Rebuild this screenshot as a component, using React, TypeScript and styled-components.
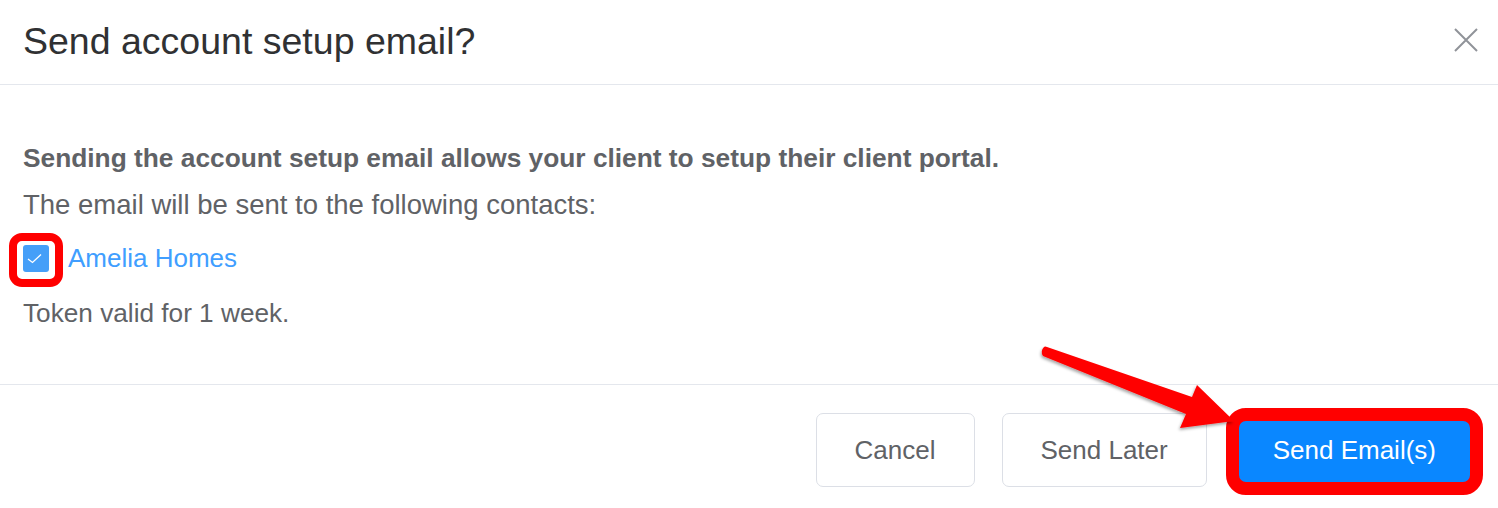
import React from 'react'
import styled, { createGlobalStyle } from 'styled-components'

const GlobalStyle = createGlobalStyle`
  html, body {
    margin: 0;
    padding: 0;
    background: #ffffff;
    font-family: "Liberation Sans", Arial, sans-serif;
  }
`

export default function App() {
  return (
    <Page>
      <GlobalStyle />
      <Header>
        <Title>Send account setup email?</Title>
        <CloseBtn aria-label="Close">
          <svg width="24" height="24" viewBox="0 0 24 24">
            <path d="M1 1 L23 23 M23 1 L1 23" stroke="#909399" strokeWidth="2" fill="none" />
          </svg>
        </CloseBtn>
      </Header>

      <Body>
        <Line bold size={26.3}>Sending the account setup email allows your client to setup their client portal.</Line>
        <Line gap={7} size={27.5}>The email will be sent to the following contacts:</Line>
        <ContactRow>
          <CheckWrap>
            <CheckBox>
              <svg width="26" height="27" viewBox="0 0 26 27">
                <path d="M5 14 L9.5 17.5 L18 9.5" stroke="#ffffff" strokeWidth="1.3" fill="none" />
              </svg>
            </CheckBox>
            <Highlight kind="check" />
          </CheckWrap>
          <ContactName>Amelia Homes</ContactName>
        </ContactRow>
        <Line gap={15} size={26.2}>Token valid for 1 week.</Line>
      </Body>

      <Footer>
        <Button>Cancel</Button>
        <Button>Send Later</Button>
        <PrimaryWrap>
          <Button primary>Send Email(s)</Button>
          <Highlight kind="button" />
        </PrimaryWrap>
      </Footer>

      <Arrow width="220" height="100" viewBox="0 0 220 100">
        <defs>
          <filter id="sh" x="-20%" y="-20%" width="140%" height="160%">
            <feDropShadow dx="-1" dy="2" stdDeviation="1.5" floodColor="#000" floodOpacity="0.35" />
          </filter>
        </defs>
        <path
          d="M14 7 Q10 11 13 16 L156 74 L150 88 L204 81 L167 45 L162 57 L17 7 Q15 6 14 7 Z"
          fill="#ff0000"
          filter="url(#sh)"
        />
      </Arrow>
    </Page>
  )
}

const Page = styled.div`
  position: relative;
  width: 1498px;
  height: 508px;
  overflow: hidden;
  background: #ffffff;
`

const Header = styled.div`
  height: 85px;
  box-sizing: border-box;
  border-bottom: 1px solid #e4e7ed;
  padding: 0 20px 0 23px;
  display: flex;
  align-items: center;
  justify-content: space-between;
`

const Title = styled.h1`
  margin: 0;
  font-size: 37.5px;
  font-weight: 400;
  color: #303133;
  line-height: 1;
`

const CloseBtn = styled.button`
  background: none;
  border: none;
  padding: 0;
  width: 24px;
  height: 24px;
  margin-bottom: 4px;
  cursor: pointer;
  svg { display: block; }
`

const Body = styled.div`
  padding: 53px 23px 51px;
`

const Line = styled.p<{ bold?: boolean; gap?: number; size: number }>`
  margin: ${p => p.gap || 0}px 0 0;
  height: 40px;
  line-height: 40px;
  font-size: ${p => p.size}px;
  font-weight: ${p => (p.bold ? 700 : 400)};
  color: #606266;
  white-space: nowrap;
`

const ContactRow = styled.div`
  margin-top: 13px;
  height: 40px;
  display: flex;
  align-items: center;
  gap: 19px;
`

const CheckWrap = styled.div`
  position: relative;
  width: 26px;
  height: 27px;
`

const CheckBox = styled.span`
  display: block;
  width: 26px;
  height: 27px;
  border-radius: 3px;
  background: #459ff8;
  svg { display: block; }
`

const ContactName = styled.span`
  font-size: 26px;
  color: #409eff;
  line-height: 40px;
`

const Highlight = styled.span<{ kind: 'check' | 'button' }>`
  position: absolute;
  border-style: solid;
  border-color: #ff0000;
  pointer-events: none;
  ${p =>
    p.kind === 'check'
      ? `
    left: -14px; right: -14px; top: -12px; bottom: -15px;
    border-width: 8px;
    border-radius: 13px;
  `
      : `
    left: -8px; right: -8px; top: -5px; bottom: -8px;
    border-width: 13px;
    border-radius: 20px;
  `}
`

const Footer = styled.div`
  border-top: 1px solid #e4e7ed;
  padding: 28px 23px 21px;
  display: flex;
  justify-content: flex-end;
  gap: 27px;
`

const PrimaryWrap = styled.div`
  position: relative;
`

const Button = styled.button<{ primary?: boolean }>`
  height: 74px;
  padding: 0 38px;
  box-sizing: border-box;
  font-family: "Liberation Sans", Arial, sans-serif;
  font-size: 26px;
  border-radius: 7px;
  border: 1px solid ${p => (p.primary ? '#0a87ff' : '#dcdfe6')};
  background: ${p => (p.primary ? '#0a87ff' : '#ffffff')};
  color: ${p => (p.primary ? '#ffffff' : '#606266')};
  cursor: pointer;
`

const Arrow = styled.svg`
  position: absolute;
  left: 1030px;
  top: 340px;
  pointer-events: none;
`
